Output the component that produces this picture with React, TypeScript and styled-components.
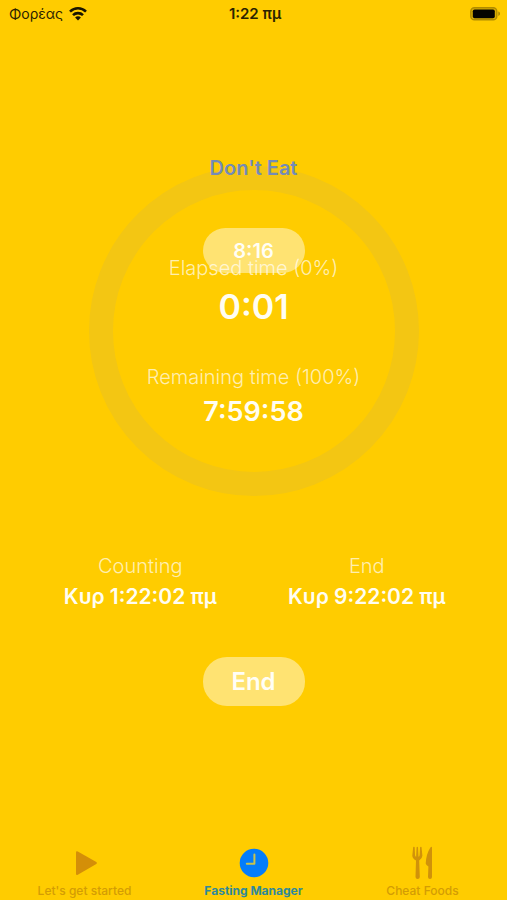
import React from 'react';
import styled, { createGlobalStyle } from 'styled-components';

const GlobalStyle = createGlobalStyle`
  * { box-sizing: border-box; }
  body {
    margin: 0;
    background: #ffcc00;
    font-family: Inter, "Liberation Sans", sans-serif;
    color: #fffdf2;
  }
`;

const Screen = styled.div`
  min-height: 100vh;
  display: flex;
  flex-direction: column;
`;

const StatusBar = styled.header`
  display: grid;
  grid-template-columns: 1fr auto 1fr;
  align-items: center;
  height: 28px;
  padding: 0 6px 0 9px;
  color: #2b2300;
  font-size: 14px;
  line-height: 20px;
`;

const Carrier = styled.div`
  display: flex;
  align-items: center;
  gap: 6px;
`;

const Clock = styled.time`
  font-size: 15px;
  font-weight: 600;
`;

const Battery = styled.div`
  display: flex;
  justify-content: flex-end;
`;

const Main = styled.main`
  flex: 1;
  display: flex;
  flex-direction: column;
  align-items: center;
  padding-top: 128px;
`;

const Title = styled.h1`
  margin: 0;
  z-index: 1;
  color: #748bb8;
  font-size: 20px;
  font-weight: 600;
  line-height: 24px;
`;

const Dial = styled.section`
  display: flex;
  flex-direction: column;
  align-items: center;
  width: 330px;
  height: 330px;
  margin-top: -14px;
  padding-top: 38px;
  border: 24px solid #f3c613;
  border-radius: 50%;
`;

const Pill = styled.button<{ $large?: boolean }>`
  width: 102px;
  height: ${(p) => (p.$large ? 49 : 45)}px;
  padding: 0;
  border: 0;
  border-radius: 24px;
  background: #ffe372;
  color: #fffef6;
  font-family: inherit;
  font-size: ${(p) => (p.$large ? 24 : 20)}px;
  font-weight: 600;
  cursor: pointer;
`;

const Reading = styled.div<{ $gap: number }>`
  display: flex;
  flex-direction: column;
  align-items: center;
  gap: 7px;
  margin-top: ${(p) => p.$gap}px;
  z-index: 1;
`;

const Label = styled.span`
  color: rgba(255, 255, 255, 0.7);
  font-size: 20px;
  font-weight: 300;
  line-height: 24px;
  white-space: nowrap;
`;

const Value = styled.strong<{ $size: number; $line: number }>`
  font-size: ${(p) => p.$size}px;
  font-weight: 600;
  line-height: ${(p) => p.$line}px;
  white-space: nowrap;
`;

const Times = styled.section`
  display: grid;
  grid-template-columns: 1fr 1fr;
  width: 100%;
  padding: 0 27px;
  margin: 58px 0 48px;
`;

const TabBar = styled.nav`
  display: grid;
  grid-template-columns: repeat(3, 1fr);
`;

const Tab = styled.a<{ $active?: boolean }>`
  display: flex;
  flex-direction: column;
  align-items: center;
  gap: 3px;
  padding-bottom: 1px;
  color: ${(p) => (p.$active ? '#2f899c' : '#d39c04')};
  font-size: 12px;
  font-weight: ${(p) => (p.$active ? 700 : 500)};
  line-height: 16px;
  text-decoration: none;
  white-space: nowrap;
`;

const WifiIcon = () => (
  <svg width="18" height="14" viewBox="0 0 18 14" fill="none" stroke="#1a1500" strokeWidth="2.6" aria-hidden="true">
    <path d="M1 4.6C5.6 .2 12.4 .2 17 4.6" />
    <path d="M4 8.1C6.8 5.4 11.2 5.4 14 8.1" />
    <path d="M9 13.5L6.1 10.5C7.7 8.9 10.3 8.9 11.9 10.5Z" fill="#1a1500" stroke="none" />
  </svg>
);

const BatteryIcon = () => (
  <svg width="31" height="14" viewBox="0 0 31 14" role="img" aria-label="Battery full">
    <rect x=".8" y=".8" width="26" height="12" rx="3.6" fill="#d9ae00" stroke="#b08c00" strokeWidth="1.4" />
    <rect x="2.8" y="2.4" width="22" height="8.8" rx="1.8" fill="#050400" />
    <path d="M28.3 4.6C30.5 5.2 30.5 8.4 28.3 9Z" fill="#a88600" />
  </svg>
);

const PlayIcon = () => (
  <svg width="34" height="34" viewBox="0 0 34 34" aria-hidden="true">
    <path d="M9.8 5.4L28.3 16Q29.7 17 28.3 18L9.8 28.8Q8 29.6 8 27.8V6.4Q8 4.6 9.8 5.4Z" fill="#d48f08" />
  </svg>
);

const ClockIcon = () => (
  <svg width="34" height="34" viewBox="0 0 34 34" aria-hidden="true">
    <circle cx="17" cy="17" r="14.3" fill="#047dfb" />
    <path d="M17.4 8.6V17.8H9.8" fill="none" stroke="#c9c34c" strokeWidth="2" strokeLinecap="round" strokeLinejoin="round" />
  </svg>
);

const FoodIcon = () => (
  <svg width="34" height="34" viewBox="0 0 34 34" fill="#d0920a" aria-hidden="true">
    <path d="M7.2 1Q8.2 .2 8.7 1.2L9 9Q9.1 10.4 10.1 10.8L10.6 1.2Q11.2 .2 12 1.2L12.5 10.8Q13.5 10.4 13.6 9L14.1 1.2Q14.7 .2 15.5 1L16.4 9.7Q16.3 12.5 13.2 14.4L13.8 31Q13.7 33 11.6 33Q9.6 33 9.5 31L10 14.4Q6.4 12.5 6.3 9.7Z" />
    <path d="M26 1.4V31Q26 33 24 33Q22 33 22 31L22.4 20.5Q20 19 19.7 17.4Q20.2 8 24.2 1.7Q25.7 0 26 1.4Z" />
  </svg>
);

export default function App() {
  return (
    <Screen>
      <GlobalStyle />
      <StatusBar>
        <Carrier>
          Φορέας
          <WifiIcon />
        </Carrier>
        <Clock>1:22 πμ</Clock>
        <Battery>
          <BatteryIcon />
        </Battery>
      </StatusBar>
      <Main>
        <Title>Don't Eat</Title>
        <Dial>
          <Pill type="button">8:16</Pill>
          <Reading $gap={-17}>
            <Label>Elapsed time (0%)</Label>
            <Value $size={34} $line={40}>0:01</Value>
          </Reading>
          <Reading $gap={38}>
            <Label>Remaining time (100%)</Label>
            <Value $size={27} $line={32}>7:59:58</Value>
          </Reading>
        </Dial>
        <Times>
          <Reading $gap={0}>
            <Label>Counting</Label>
            <Value $size={21} $line={24}>Κυρ 1:22:02 πμ</Value>
          </Reading>
          <Reading $gap={0}>
            <Label>End</Label>
            <Value $size={21} $line={24}>Κυρ 9:22:02 πμ</Value>
          </Reading>
        </Times>
        <Pill type="button" $large>End</Pill>
      </Main>
      <TabBar aria-label="Sections">
        <Tab href="#start">
          <PlayIcon />
          Let's get started
        </Tab>
        <Tab href="#fasting" $active aria-current="page">
          <ClockIcon />
          Fasting Manager
        </Tab>
        <Tab href="#foods">
          <FoodIcon />
          Cheat Foods
        </Tab>
      </TabBar>
    </Screen>
  );
}
